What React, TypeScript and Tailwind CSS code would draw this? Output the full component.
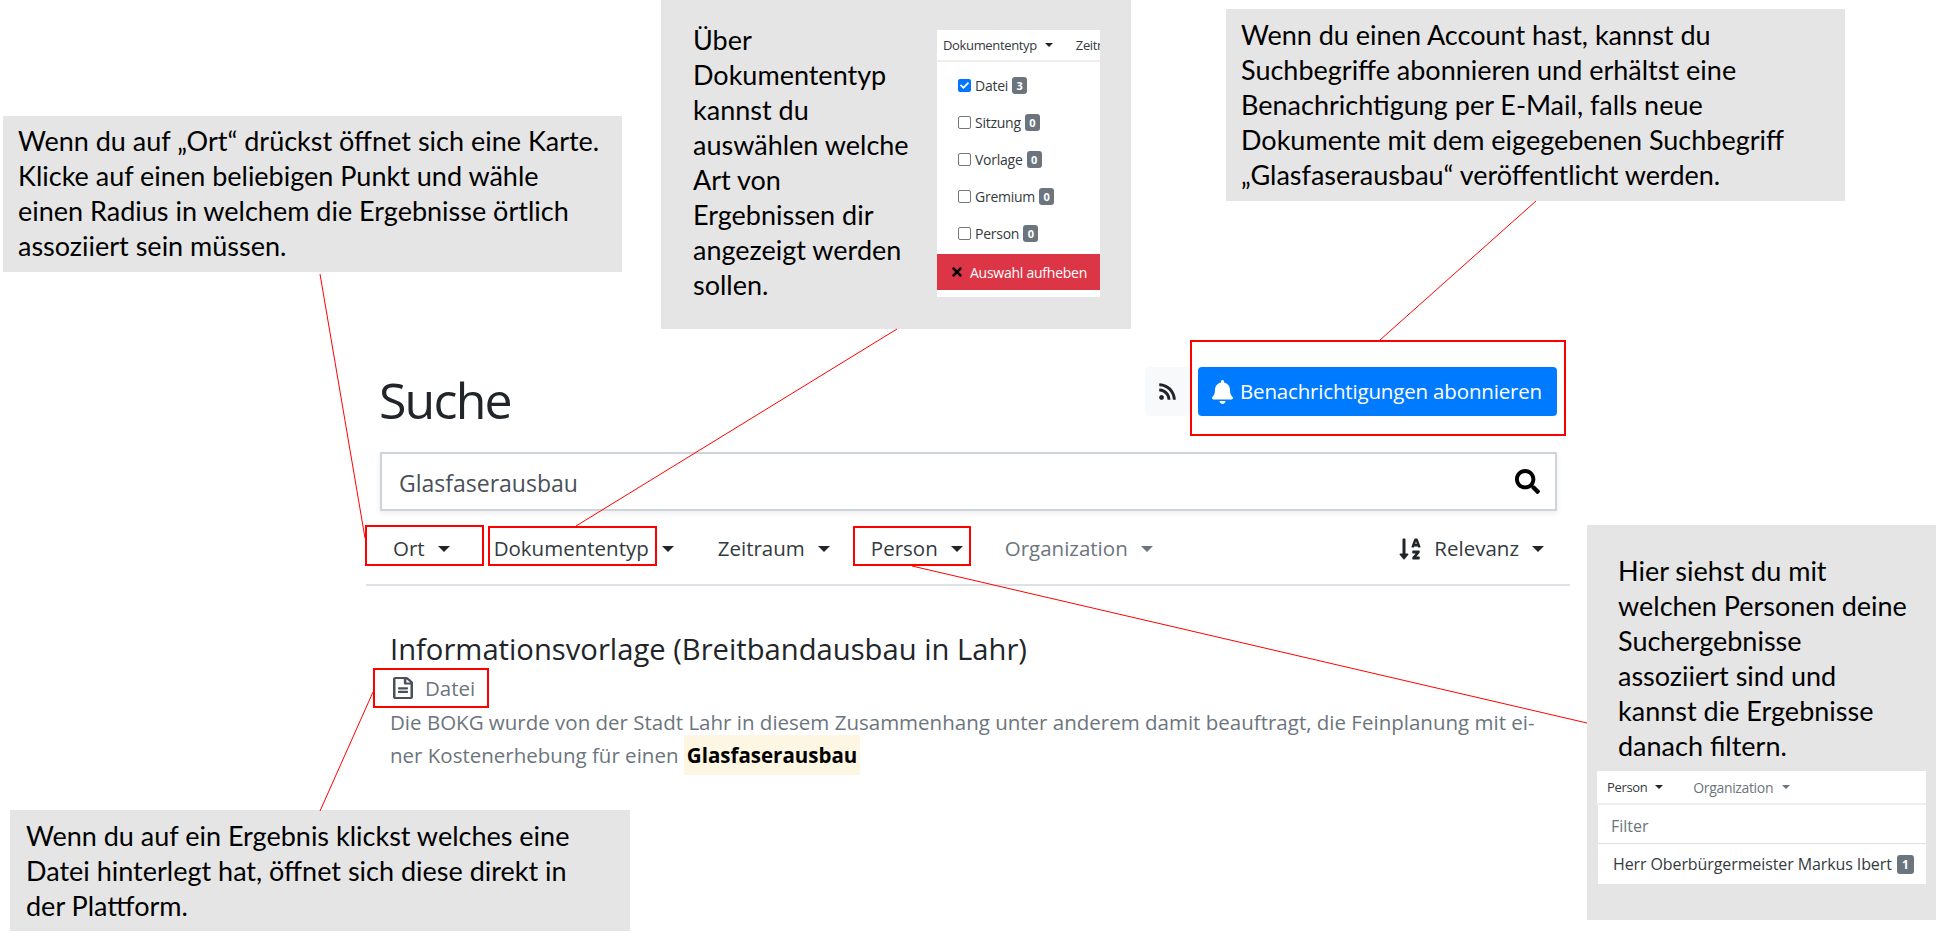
import { FaBell, FaCheck, FaRegFileAlt, FaRss, FaSearch, FaSortAlphaDown, FaTimes } from 'react-icons/fa';

const uiFont = 'font-["Open_Sans","Noto_Sans",sans-serif]';
const noteFont = 'font-["Lato","Noto_Sans",sans-serif]';

function Caret({ muted, small }: { muted?: boolean; small?: boolean }) {
  if (small) {
    return <span className={`inline-block border-x-[4px] border-t-[4px] border-x-transparent ${muted ? 'border-t-[#6c757d]' : 'border-t-[#212529]'}`} />;
  }
  return <span className={`inline-block border-x-[6px] border-t-[6px] border-x-transparent ${muted ? 'border-t-[#6c757d]' : 'border-t-[#212529]'}`} />;
}

function NavItem({ label, muted, className = '' }: { label: string; muted?: boolean; className?: string }) {
  return (
    <div className={`flex items-center gap-[13px] text-[20.5px] ${muted ? 'text-[#6c757d]' : 'text-[#343a40]'} ${className}`}>
      <span>{label}</span>
      <Caret muted={muted} />
    </div>
  );
}

function Badge({ n }: { n: number }) {
  return (
    <span className="flex h-[17px] w-[15px] items-center justify-center rounded-[3px] bg-[#6c757d] text-[11px] font-bold text-white">{n}</span>
  );
}

function TypeRow({ label, count, checked }: { label: string; count: number; checked?: boolean }) {
  return (
    <div className="flex h-[37px] items-center pl-[21px] text-[14px] tracking-[-0.25px] text-[#343a40]">
      {checked ? (
        <span className="flex h-[13px] w-[13px] items-center justify-center rounded-[2px] bg-[#0075ff]">
          <FaCheck className="h-[9px] w-[9px] text-white" />
        </span>
      ) : (
        <span className="h-[13px] w-[13px] rounded-[2px] border border-[#767676] bg-white" />
      )}
      <span className="ml-[4px] mr-[4px]">{label}</span>
      <Badge n={count} />
    </div>
  );
}

function TypePanel() {
  return (
    <div className={`mt-[30px] flex h-[267px] w-[163px] flex-col overflow-hidden bg-white ${uiFont}`}>
      <div className="flex h-[30px] shrink-0 items-center whitespace-nowrap pl-[6px] text-[13px] tracking-[-0.35px] text-[#343a40]">
        <span>Dokumententyp</span>
        <span className="ml-[8px] flex"><Caret small /></span>
        <span className="ml-[23px]">Zeitraum</span>
      </div>
      <div className="h-[2px] shrink-0 bg-[#eeeeee]" />
      <div className="flex flex-col pt-[5px]">
        <TypeRow label="Datei" count={3} checked />
        <TypeRow label="Sitzung" count={0} />
        <TypeRow label="Vorlage" count={0} />
        <TypeRow label="Gremium" count={0} />
        <TypeRow label="Person" count={0} />
      </div>
      <div className="mt-[2px] flex h-[36px] shrink-0 items-center whitespace-nowrap bg-[#dc3545] pl-[14px] text-[14px] tracking-[-0.25px] text-white">
        <FaTimes className="h-[14px] w-[12px] text-black" />
        <span className="ml-[7px]">Auswahl aufheben</span>
      </div>
    </div>
  );
}

function PersonPanel() {
  return (
    <div className={`ml-[10px] mt-[8px] w-[329px] ${uiFont}`}>
      <div className="flex h-[32px] items-center whitespace-nowrap bg-white pl-[10px] text-[13px] tracking-[-0.35px]">
        <span className="text-[#343a40]">Person</span>
        <span className="ml-[8px] flex"><Caret small /></span>
        <span className="ml-[30px] text-[14px] text-[#6c757d]">Organization</span>
        <span className="ml-[9px] flex"><Caret small muted /></span>
      </div>
      <div className="h-[2px] bg-[#eeeeee]" />
      <div className="ml-[1px] flex h-[39px] items-center border-b border-[#dee2e6] bg-white pl-[13px] pt-[5px] text-[16px] text-[#6c757d]">Filter</div>
      <div className="ml-[1px] flex h-[40px] items-center whitespace-nowrap bg-white pl-[15px] text-[16px] tracking-[-0.1px] text-[#343a40]">
        <span>Herr Oberbürgermeister Markus Ibert</span>
        <span className="ml-[5px] flex h-[19px] w-[17px] items-center justify-center rounded-[3px] bg-[#6c757d] text-[12px] font-bold text-white">1</span>
      </div>
    </div>
  );
}

function Frame({ className }: { className: string }) {
  return <div className={`absolute border-2 border-[#ff0000] ${className}`} />;
}

export default function App() {
  return (
    <div className={`relative h-[941px] w-[1936px] overflow-hidden bg-white ${uiFont}`}>
      {/* eigentliche Suchseite */}
      <main className="ml-[366px] w-[1204px] pt-[367px]">
        <header className="flex h-[49px] items-start justify-between pl-[13px] pr-[13px]">
          <h1 className="mt-[9px] text-[50px] leading-[49px] tracking-[-1.8px] text-[#212529]">Suche</h1>
          <div className="flex h-full">
            <button className="flex w-[45px] items-center justify-center rounded-[4px] bg-[#f8f9fa] text-[#212529]">
              <FaRss className="h-[19px] w-[19px]" />
            </button>
            <button className="ml-[8px] flex w-[359px] items-center rounded-[4px] bg-[#007bff] pl-[14px] text-[20.5px] tracking-[-0.17px] text-white">
              <FaBell className="h-[24px] w-[21px]" />
              <span className="ml-[7px] whitespace-nowrap">Benachrichtigungen abonnieren</span>
            </button>
          </div>
        </header>

        <div className="mx-[14px] mr-[13px] mt-[36px] flex h-[59px] items-center justify-between border-2 border-[#ced4da] bg-white pl-[17px] pr-[15px] shadow-[0_2px_6px_rgba(0,0,0,0.08)]">
          <span className="pt-[3px] text-[23px] text-[#495057]">Glasfaserausbau</span>
          <FaSearch className="h-[25px] w-[25px] text-black" />
        </div>

        <nav className="flex h-[75px] items-center justify-between border-b-2 border-[#dee2e6] pl-[27px] pr-[26px] pt-[2px]">
          <div className="flex items-center gap-[44px]">
            <NavItem label="Ort" />
            <NavItem label="Dokumententyp" />
            <NavItem label="Zeitraum" />
            <NavItem label="Person" className="-ml-[3px]" />
            <NavItem label="Organization" muted className="-ml-[2px]" />
          </div>
          <div className="flex items-center">
            <FaSortAlphaDown className="h-[24px] w-[22px] text-[#212529]" />
            <span className="ml-[13px] mr-[13px] text-[20.5px] text-[#343a40]">Relevanz</span>
            <Caret />
          </div>
        </nav>

        <article className="pl-[24px] pt-[45px]">
          <h2 className="whitespace-nowrap text-[29.2px] leading-[36px] text-[#212529]">Informationsvorlage (Breitbandausbau in Lahr)</h2>
          <div className="mt-[3px] flex h-[36px] items-center text-[20.5px] text-[#6c757d]">
            <FaRegFileAlt preserveAspectRatio="none" className="ml-[3px] h-[22px] w-[20px] text-[#495057]" />
            <span className="ml-[12px]">Datei</span>
          </div>
          <p className="whitespace-nowrap text-[20.5px] leading-[33px] text-[#6c757d]">
            Die BOKG wurde von der Stadt Lahr in diesem Zusammenhang unter anderem damit beauftragt, die Feinplanung mit ei-
            <br />
            ner Kostenerhebung für einen{' '}
            <mark className="bg-[#fdf6e3] px-[3px] py-[6px] font-bold text-black">Glasfaserausbau</mark>
          </p>
        </article>
      </main>

      {/* Erklärungen über der Seite */}
      <div className={`absolute left-[3px] top-[116px] h-[156px] w-[619px] whitespace-nowrap bg-[#e5e5e5] pl-[15px] pt-[7px] text-[27px] leading-[35px] text-black ${noteFont}`}>
        Wenn du auf „Ort“ drückst öffnet sich eine Karte.
        <br />
        Klicke auf einen beliebigen Punkt und wähle
        <br />
        einen Radius in welchem die Ergebnisse örtlich
        <br />
        assoziiert sein müssen.
      </div>

      <div className={`absolute left-[661px] top-0 flex h-[329px] w-[470px] bg-[#e5e5e5] pl-[32px] text-[27px] leading-[35px] text-black ${noteFont}`}>
        <div className="w-[244px] shrink-0 whitespace-nowrap pt-[22px]">
          Über
          <br />
          Dokumententyp
          <br />
          kannst du
          <br />
          auswählen welche
          <br />
          Art von
          <br />
          Ergebnissen dir
          <br />
          angezeigt werden
          <br />
          sollen.
        </div>
        <TypePanel />
      </div>

      <div className={`absolute left-[1226px] top-[9px] h-[192px] w-[619px] whitespace-nowrap bg-[#e5e5e5] pl-[15px] pt-[8px] text-[27px] leading-[35px] text-black ${noteFont}`}>
        Wenn du einen Account hast, kannst du
        <br />
        Suchbegriffe abonnieren und erhältst eine
        <br />
        Benachrichtigung per E-Mail, falls neue
        <br />
        Dokumente mit dem eigegebenen Suchbegriff
        <br />
        „Glasfaserausbau“ veröffentlicht werden.
      </div>

      <div className={`absolute left-[1587px] top-[525px] h-[395px] w-[349px] whitespace-nowrap bg-[#e5e5e5] pt-[28px] text-[27px] leading-[35px] text-black ${noteFont}`}>
        <div className="pl-[31px]">
          Hier siehst du mit
          <br />
          welchen Personen deine
          <br />
          Suchergebnisse
          <br />
          assoziiert sind und
          <br />
          kannst die Ergebnisse
          <br />
          danach filtern.
        </div>
        <PersonPanel />
      </div>

      <div className={`absolute left-[10px] top-[810px] h-[121px] w-[620px] whitespace-nowrap bg-[#e5e5e5] pl-[16px] pt-[8px] text-[27px] leading-[35px] text-black ${noteFont}`}>
        Wenn du auf ein Ergebnis klickst welches eine
        <br />
        Datei hinterlegt hat, öffnet sich diese direkt in
        <br />
        der Plattform.
      </div>

      {/* rote Markierungen */}
      <Frame className="left-[1190px] top-[340px] h-[96px] w-[376px]" />
      <Frame className="left-[365px] top-[525px] h-[41px] w-[119px]" />
      <Frame className="left-[488px] top-[526px] h-[40px] w-[169px]" />
      <Frame className="left-[853px] top-[526px] h-[40px] w-[118px]" />
      <Frame className="left-[373px] top-[668px] h-[40px] w-[116px]" />

      <svg className="pointer-events-none absolute left-0 top-0 h-[941px] w-[1936px]" viewBox="0 0 1936 941" fill="none" stroke="#ff0000" strokeWidth="1">
        <line x1="320" y1="274" x2="365" y2="538" />
        <line x1="897" y1="329" x2="576" y2="526" />
        <line x1="1536" y1="201" x2="1380" y2="340" />
        <line x1="912" y1="566" x2="1587" y2="723" />
        <line x1="373" y1="692" x2="320" y2="811" />
      </svg>
    </div>
  );
}
